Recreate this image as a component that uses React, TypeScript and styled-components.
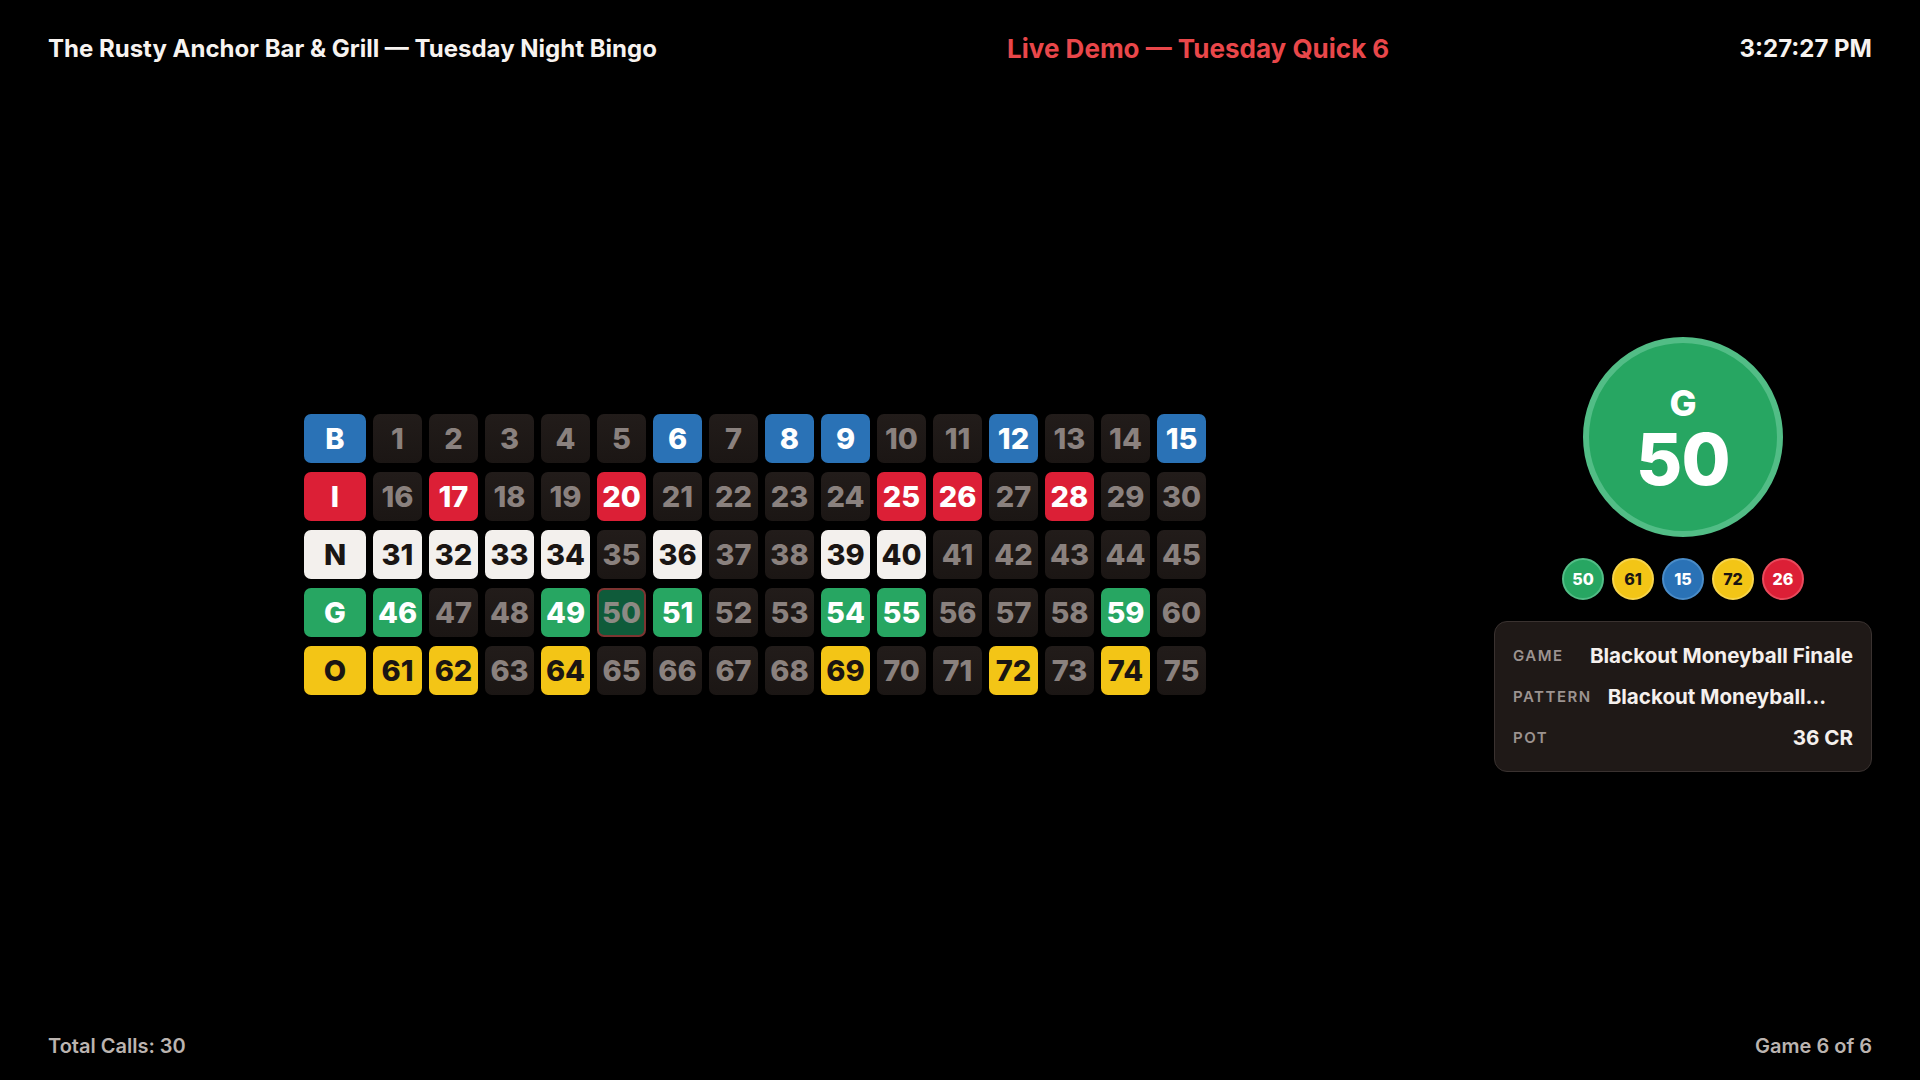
import React from "react";
import styled, { createGlobalStyle } from "styled-components";

const GlobalStyle = createGlobalStyle`
  html, body {
    margin: 0;
    padding: 0;
    background: #000;
    font-family: "Inter", "Noto Sans", "Liberation Sans", sans-serif;
    -webkit-font-smoothing: antialiased;
  }
  * { box-sizing: border-box; }
`;

type Tone = "blue" | "red" | "white" | "green" | "yellow";

const tones: Record<Tone, { bg: string; fg: string; ring: string }> = {
  blue: { bg: "#2a72b6", fg: "#ffffff", ring: "#4a8cc8" },
  red: { bg: "#dc1f36", fg: "#ffffff", ring: "#e84a5c" },
  white: { bg: "#f3f0ed", fg: "#1a1513", ring: "#ffffff" },
  green: { bg: "#27a662", fg: "#ffffff", ring: "#52bd86" },
  yellow: { bg: "#f3c516", fg: "#1a1513", ring: "#f7d44a" },
};

const Screen = styled.div`
  width: 100vw;
  height: 100vh;
  display: flex;
  flex-direction: column;
  padding: 34px 48px 22px;
  color: #f5f1ee;
`;

const Header = styled.header`
  display: flex;
  justify-content: space-between;
  align-items: center;
  font-weight: 700;
  line-height: 30px;
`;

const HeaderText = styled.div<{ $accent?: boolean }>`
  font-size: ${(p) => (p.$accent ? "26px" : "24px")};
  color: ${(p) => (p.$accent ? "#e9474a" : "#f7f3f0")};
`;

const Main = styled.main`
  flex: 1;
  display: flex;
  align-items: center;
  gap: 32px;
  padding-top: 10px;
`;

const BoardArea = styled.section`
  flex: 1;
  display: flex;
  justify-content: center;
`;

const Board = styled.div`
  display: grid;
  grid-template-columns: 62px repeat(15, 49px);
  grid-auto-rows: 49px;
  column-gap: 7px;
  row-gap: 9px;
`;

const Cell = styled.div<{ $tone?: Tone; $current?: boolean }>`
  display: flex;
  align-items: center;
  justify-content: center;
  border-radius: 7px;
  font-size: 29px;
  font-weight: 800;
  background: ${(p) =>
    p.$current
      ? "#0f5b3a"
      : p.$tone
      ? tones[p.$tone].bg
      : "linear-gradient(180deg, #221c1a 0%, #1b1614 100%)"};
  color: ${(p) =>
    p.$current ? "#8c8a84" : p.$tone ? tones[p.$tone].fg : "#8a817e"};
  border: ${(p) => (p.$current ? "2px solid #7d3431" : "none")};
`;

const LetterCell = styled(Cell)`
  font-size: 29px;
`;

const Panel = styled.aside`
  width: 378px;
  display: flex;
  flex-direction: column;
  align-items: center;
  gap: 21px;
`;

const BigBall = styled.div<{ $tone: Tone }>`
  width: 200px;
  height: 200px;
  border-radius: 50%;
  background: ${(p) => tones[p.$tone].bg};
  border: 6px solid ${(p) => tones[p.$tone].ring};
  display: flex;
  flex-direction: column;
  align-items: center;
  justify-content: center;
  gap: 2px;
  padding-top: 6px;
  color: ${(p) => tones[p.$tone].fg};
  font-weight: 800;
`;

const BallLetter = styled.div`
  font-size: 36px;
  line-height: 36px;
`;

const BallNumber = styled.div`
  font-size: 71px;
  line-height: 72px;
  letter-spacing: -0.01em;
`;

const RecentRow = styled.div`
  display: flex;
  gap: 8px;
`;

const SmallBall = styled.div<{ $tone: Tone }>`
  width: 42px;
  height: 42px;
  border-radius: 50%;
  background: ${(p) => tones[p.$tone].bg};
  border: 2px solid ${(p) => tones[p.$tone].ring};
  color: ${(p) => tones[p.$tone].fg};
  display: flex;
  align-items: center;
  justify-content: center;
  font-size: 16px;
  font-weight: 800;
`;

const InfoCard = styled.div`
  align-self: stretch;
  background: #1f1917;
  border: 1px solid #3a3230;
  border-radius: 13px;
  padding: 13px 18px;
  display: flex;
  flex-direction: column;
`;

const InfoRow = styled.div`
  height: 41px;
  display: flex;
  align-items: center;
  justify-content: space-between;
  gap: 16px;
`;

const InfoLabel = styled.span`
  font-size: 15px;
  font-weight: 600;
  letter-spacing: 0.1em;
  color: #9c9390;
  text-transform: uppercase;
  white-space: nowrap;
`;

const InfoValue = styled.span<{ $truncated?: boolean }>`
  flex: 1;
  min-width: 0;
  font-size: 20.6px;
  font-weight: 700;
  color: #f5f0ed;
  white-space: nowrap;
  overflow: hidden;
  text-overflow: ellipsis;
  text-align: ${(p) => (p.$truncated ? "left" : "right")};
`;

const Footer = styled.footer`
  display: flex;
  justify-content: space-between;
  font-size: 20px;
  font-weight: 600;
  line-height: 24px;
  color: #bbb4b0;
`;

const letters: { letter: string; tone: Tone }[] = [
  { letter: "B", tone: "blue" },
  { letter: "I", tone: "red" },
  { letter: "N", tone: "white" },
  { letter: "G", tone: "green" },
  { letter: "O", tone: "yellow" },
];

const called = new Set([
  6, 8, 9, 12, 15, 17, 20, 25, 26, 28, 31, 32, 33, 34, 36, 39, 40, 46, 49, 51,
  54, 55, 59, 61, 62, 64, 69, 72, 74,
]);
const current = 50;

const recent: { n: number; tone: Tone }[] = [
  { n: 50, tone: "green" },
  { n: 61, tone: "yellow" },
  { n: 15, tone: "blue" },
  { n: 72, tone: "yellow" },
  { n: 26, tone: "red" },
];

const info = [
  { label: "Game", value: "Blackout Moneyball Finale" },
  { label: "Pattern", value: "Blackout Moneyball…", truncated: true },
  { label: "Pot", value: "36 CR" },
];

export default function App() {
  return (
    <>
      <GlobalStyle />
      <Screen>
        <Header>
          <HeaderText>The Rusty Anchor Bar &amp; Grill — Tuesday Night Bingo</HeaderText>
          <HeaderText $accent>Live Demo — Tuesday Quick 6</HeaderText>
          <HeaderText>3:27:27 PM</HeaderText>
        </Header>

        <Main>
          <BoardArea>
            <Board>
              {letters.map((row, r) => (
                <React.Fragment key={row.letter}>
                  <LetterCell $tone={row.tone}>{row.letter}</LetterCell>
                  {Array.from({ length: 15 }, (_, i) => {
                    const n = r * 15 + i + 1;
                    return (
                      <Cell
                        key={n}
                        $tone={called.has(n) ? row.tone : undefined}
                        $current={n === current}
                      >
                        {n}
                      </Cell>
                    );
                  })}
                </React.Fragment>
              ))}
            </Board>
          </BoardArea>

          <Panel>
            <BigBall $tone="green">
              <BallLetter>G</BallLetter>
              <BallNumber>50</BallNumber>
            </BigBall>
            <RecentRow>
              {recent.map((b) => (
                <SmallBall key={b.n} $tone={b.tone}>
                  {b.n}
                </SmallBall>
              ))}
            </RecentRow>
            <InfoCard>
              {info.map((row) => (
                <InfoRow key={row.label}>
                  <InfoLabel>{row.label}</InfoLabel>
                  <InfoValue $truncated={row.truncated}>{row.value}</InfoValue>
                </InfoRow>
              ))}
            </InfoCard>
          </Panel>
        </Main>

        <Footer>
          <span>Total Calls: 30</span>
          <span>Game 6 of 6</span>
        </Footer>
      </Screen>
    </>
  );
}
